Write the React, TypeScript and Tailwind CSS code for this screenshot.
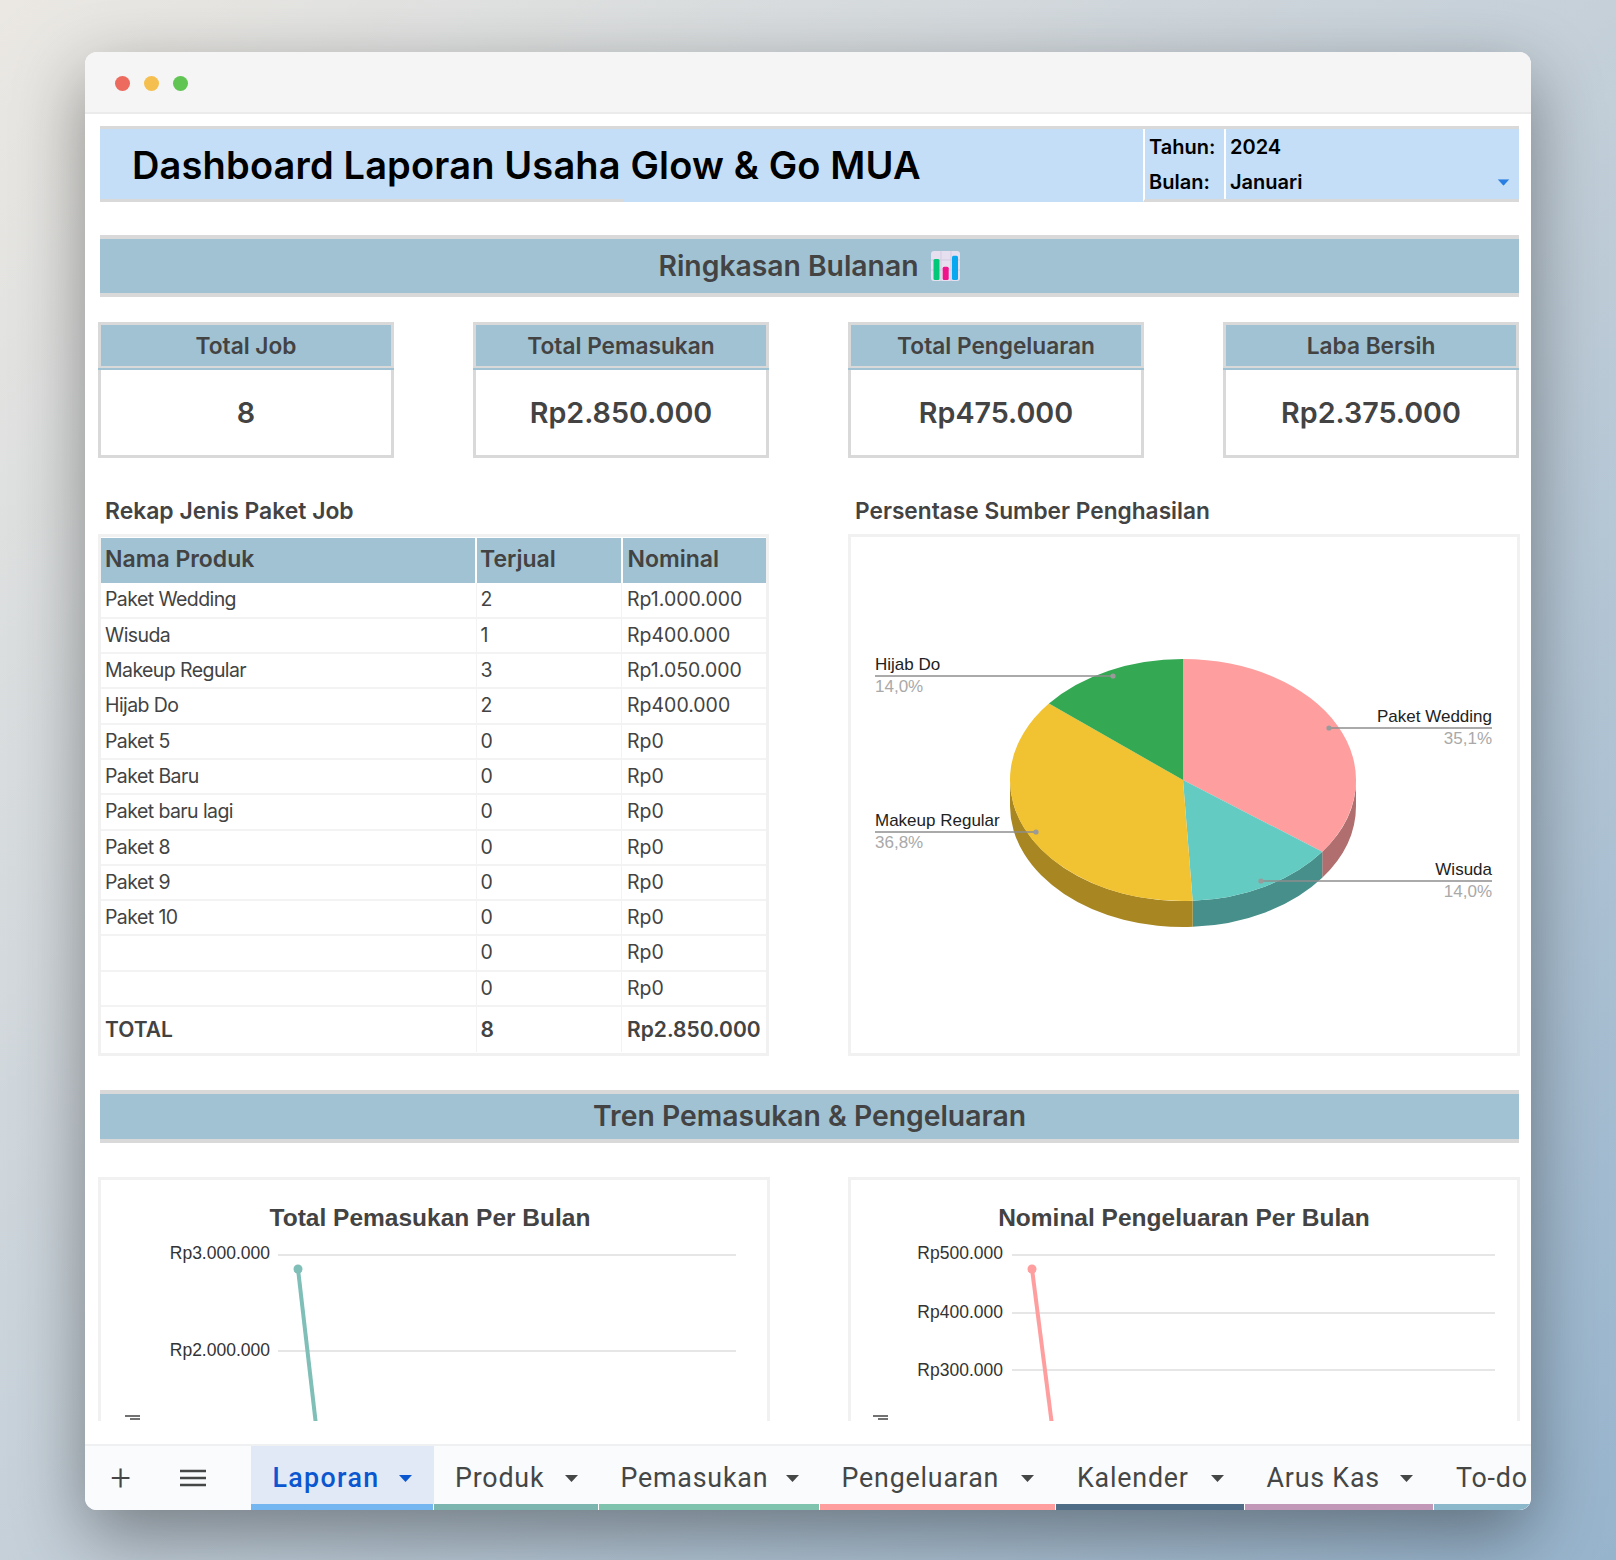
const rows = [
  ["Paket Wedding", "2", "Rp1.000.000"],
  ["Wisuda", "1", "Rp400.000"],
  ["Makeup Regular", "3", "Rp1.050.000"],
  ["Hijab Do", "2", "Rp400.000"],
  ["Paket 5", "0", "Rp0"],
  ["Paket Baru", "0", "Rp0"],
  ["Paket baru lagi", "0", "Rp0"],
  ["Paket 8", "0", "Rp0"],
  ["Paket 9", "0", "Rp0"],
  ["Paket 10", "0", "Rp0"],
  ["", "0", "Rp0"],
  ["", "0", "Rp0"],
];

const cards = [
  { title: "Total Job", value: "8" },
  { title: "Total Pemasukan", value: "Rp2.850.000" },
  { title: "Total Pengeluaran", value: "Rp475.000" },
  { title: "Laba Bersih", value: "Rp2.375.000" },
];

const tabs = [
  { name: "Laporan", width: "w-[182.5px]", bar: "bg-[#74b6f0]", active: true },
  { name: "Produk", width: "w-[165.5px]", bar: "bg-[#7cb5b0]" },
  { name: "Pemasukan", width: "w-[221px]", bar: "bg-[#7fc3ae]" },
  { name: "Pengeluaran", width: "w-[235.5px]", bar: "bg-[#ff9e9e]" },
  { name: "Kalender", width: "w-[189.5px]", bar: "bg-[#4f6d87]" },
  { name: "Arus Kas", width: "w-[189px]", bar: "bg-[#c198b8]" },
];

function Triangle({ className }: { className: string }) {
  return (
    <svg width="13" height="7" viewBox="0 0 13 7" className={className}>
      <polygon points="0,0 13,0 6.5,7" fill="currentColor" />
    </svg>
  );
}

function Band({ children, className }: { children: React.ReactNode; className: string }) {
  return (
    <div className={`mr-[1px] flex items-center justify-center bg-[#a0c2d2] border-y-[4px] border-[#d9d9d9] text-[#434343] text-[28.3px] font-semibold ${className}`}>
      {children}
    </div>
  );
}

function BarEmoji() {
  return (
    <svg width="29" height="30" viewBox="0 0 29 30" className="ml-[13px]">
      <rect x="0" y="0" width="29" height="30" rx="3" fill="#e6dff0" />
      <path d="M0 9h29M0 19h29M10 0v30M20 0v30" stroke="#d3cbe0" strokeWidth="1" />
      <rect x="2.5" y="8" width="6" height="21" rx="1.5" fill="#00c878" />
      <rect x="11.7" y="15.7" width="6" height="13.3" rx="1.5" fill="#f0148c" />
      <rect x="21" y="4.7" width="6" height="24.3" rx="1.5" fill="#08a8f0" />
    </svg>
  );
}

function StatCard({ title, value }: { title: string; value: string }) {
  return (
    <div className="w-[296px]">
      <div className="h-[46px] pt-[2px] flex items-center justify-center bg-[#a0c2d2] border-[3px] border-b-[2px] border-[#d9d9d9] text-[22.7px] font-semibold text-[#434343]">
        {title}
      </div>
      <div className="h-[2px] bg-[#a0c2d2]" />
      <div className="h-[88px] flex items-center justify-center border-[3px] border-t-0 border-[#d9d9d9] text-[28.7px] font-semibold text-[#434343]">
        {value}
      </div>
    </div>
  );
}

function ProductTable() {
  return (
    <div className="border-[3px] border-[#f1f1f1] h-[522px] w-[671px]">
      <table className="w-full table-fixed border-collapse text-[#434343]">
        <colgroup>
          <col className="w-[375px]" />
          <col className="w-[145.5px]" />
          <col />
        </colgroup>
        <thead>
          <tr className="h-[45px] bg-[#a0c2d2] text-[23px] border-t border-white">
            <th className="pl-[4px] pb-[2px] text-left font-semibold">Nama Produk</th>
            <th className="pl-[3px] pb-[2px] text-left font-semibold border-l-2 border-white">Terjual</th>
            <th className="pl-[5px] pb-[2px] text-left font-semibold border-l-2 border-white">Nominal</th>
          </tr>
        </thead>
        <tbody className="text-[19.5px]">
          {rows.map((r, i) => (
            <tr key={i} className="h-[35.3px] border-b-2 border-[#f3f3f3]">
              <td className="pl-[4px] tracking-[-0.03em]">{r[0]}</td>
              <td className="pl-[4px] border-l border-[#f3f3f3]">{r[1]}</td>
              <td className="pl-[5px] border-l border-[#f3f3f3]">{r[2]}</td>
            </tr>
          ))}
          <tr className="h-[46px] text-[21px] font-semibold">
            <td className="pl-[4px]">TOTAL</td>
            <td className="pl-[4px] border-l border-[#f3f3f3]">8</td>
            <td className="pl-[5px] border-l border-[#f3f3f3]">Rp2.850.000</td>
          </tr>
        </tbody>
      </table>
    </div>
  );
}

// titik di elips pie: x = cx + rx sin t, y = cy - ry cos t
const CX = 332;
const CY = 243;
const RX = 173;
const RY = 121;
const DEPTH = 26;

function pt(deg: number, dy = 0) {
  const t = (deg * Math.PI) / 180;
  return `${(CX + RX * Math.sin(t)).toFixed(2)} ${(CY - RY * Math.cos(t) + dy).toFixed(2)}`;
}

function slice(a: number, b: number) {
  const large = b - a > 180 ? 1 : 0;
  return `M${CX} ${CY}L${pt(a)}A${RX} ${RY} 0 ${large} 1 ${pt(b)}Z`;
}

function side(a: number, b: number) {
  return `M${pt(a)}A${RX} ${RY} 0 0 1 ${pt(b)}L${pt(b, DEPTH)}A${RX} ${RY} 0 0 0 ${pt(a, DEPTH)}Z`;
}

function PieLabel({ x, y, anchor, name, pct, x1, x2, dotX }: { x: number; y: number; anchor: "start" | "end"; name: string; pct: string; x1: number; x2: number; dotX: number }) {
  return (
    <g>
      <line x1={x1} x2={x2} y1={y} y2={y} stroke="#8e8e8e" strokeWidth="1.6" />
      <circle cx={dotX} cy={y} r="2.6" fill="#9a9a9a" />
      <text x={x} y={y - 6} textAnchor={anchor} fontSize="17" fill="#222222">{name}</text>
      <text x={x} y={y + 16} textAnchor={anchor} fontSize="17" fill="#a9a9a9">{pct}</text>
    </g>
  );
}

function PieChart() {
  return (
    <div className="border-[3px] border-[#f1f1f1] h-[522px] w-[672px]">
      <svg width="666" height="516" viewBox="0 0 666 516" className="font-['Liberation_Sans',sans-serif]">
        <path d={side(90, 126.4)} fill="#b06e6e" />
        <path d={side(126.4, 176.8)} fill="#468f8a" />
        <path d={side(176.8, 270)} fill="#a88722" />
        <path d={slice(0, 126.4)} fill="#ff9e9e" />
        <path d={slice(126.4, 176.8)} fill="#64cbc3" />
        <path d={slice(176.8, 309.2)} fill="#f1c232" />
        <path d={slice(309.2, 360)} fill="#34a853" />
        <PieLabel x={24} y={139} anchor="start" name="Hijab Do" pct="14,0%" x1={24} x2={262} dotX={262} />
        <PieLabel x={641} y={191} anchor="end" name="Paket Wedding" pct="35,1%" x1={478} x2={641} dotX={478} />
        <PieLabel x={24} y={295} anchor="start" name="Makeup Regular" pct="36,8%" x1={24} x2={185} dotX={185} />
        <PieLabel x={641} y={344} anchor="end" name="Wisuda" pct="14,0%" x1={410} x2={641} dotX={410} />
      </svg>
    </div>
  );
}

function LineChart({ title, titleX, labels, color, gridX1, gridX2, labelX, lineX1, lineX2, tickX }: { title: string; titleX: number; labels: { text: string; y: number; labelY: number }[]; color: string; gridX1: number; gridX2: number; labelX: number; lineX1: number; lineX2: number; tickX: number }) {
  return (
    <div className="h-[244px] w-[672px] border-x-[3px] border-t-[3px] border-[#f1f1f1] overflow-hidden">
      <svg width="666" height="241" viewBox="0 0 666 241" className="font-['Liberation_Sans',sans-serif]">
        <text x={titleX} y="46" textAnchor="middle" fontSize="24.5" fontWeight="700" fill="#434343">{title}</text>
        {labels.map((l) => (
          <g key={l.text}>
            <line x1={gridX1} x2={gridX2} y1={l.y} y2={l.y} stroke="#dedede" strokeWidth="1.5" />
            <text x={labelX} y={l.labelY} textAnchor="end" fontSize="17.5" fill="#333333">{l.text}</text>
          </g>
        ))}
        <line x1={lineX1} y1="89" x2={lineX2} y2="245" stroke={color} strokeWidth="4" />
        <circle cx={lineX1} cy="89" r="4.5" fill={color} />
        <path d={`M${tickX} 236h15M${tickX + 5} 239h10`} stroke="#444444" strokeWidth="1.5" />
      </svg>
    </div>
  );
}

export default function App() {
  return (
    <div className="w-[1616px] h-[1560px] overflow-hidden bg-linear-to-br from-[#ebe8e3] via-[#c5d0d9] to-[#97b4cd] pl-[85px] pt-[52px] font-['Inter',sans-serif]">
      <div className="w-[1446px] h-[1458px] flex flex-col bg-white rounded-xl overflow-hidden shadow-[0_24px_70px_rgba(0,0,0,0.4)]">
        <div className="h-[62px] shrink-0 flex items-center gap-[14px] pl-[30px] pt-[2px] bg-[#f5f5f5] border-b-2 border-[#ebebeb]">
          <span className="w-[15px] h-[15px] rounded-full bg-[#ec6a5e]" />
          <span className="w-[15px] h-[15px] rounded-full bg-[#f4bf4f]" />
          <span className="w-[15px] h-[15px] rounded-full bg-[#61c554]" />
        </div>

        <div className="h-[1307px] shrink-0 overflow-hidden pt-3 pl-[15px] pr-[11px]">
          <div className="h-[76px] mr-[1px] flex bg-[#c5def7] border-t-[3px] border-[#d9d9d9] text-black">
            <div className="w-[1043px] flex items-center pl-[32px] relative">
              <span className="text-[38px] font-semibold tracking-[0.004em] whitespace-nowrap">Dashboard Laporan Usaha Glow &amp; Go MUA</span>
              <div className="absolute left-0 bottom-0 w-[524px] h-[3px] bg-[#d9d9d9]" />
            </div>
            <div className="flex-1 flex flex-col border-l-2 border-b-[3px] border-l-white border-b-[#d9d9d9] text-[20px] font-semibold">
              <div className="h-[36px] flex items-center">
                <span className="w-[81px] pl-[4px] border-r-2 border-white h-full flex items-center">Tahun:</span>
                <span className="pl-[4px]">2024</span>
              </div>
              <div className="flex-1 flex items-center">
                <span className="w-[81px] pl-[4px] border-r-2 border-white h-full flex items-center">Bulan:</span>
                <span className="pl-[4px] flex-1">Januari</span>
                <Triangle className="text-[#2a7de1] mr-[9px] scale-90" />
              </div>
            </div>
          </div>

          <Band className="mt-[33px] h-[62px]">
            <span>Ringkasan Bulanan</span>
            <BarEmoji />
          </Band>

          <div className="mt-[25px] -ml-[2px] mr-[1px] flex justify-between">
            {cards.map((c) => (
              <StatCard key={c.title} title={c.title} value={c.value} />
            ))}
          </div>

          <div className="mt-[33px] -ml-[2px] flex justify-between">
            <div>
              <h2 className="h-[43px] pl-[7px] pt-[3px] text-[22.9px] font-semibold text-[#434343]">Rekap Jenis Paket Job</h2>
              <ProductTable />
            </div>
            <div>
              <h2 className="h-[43px] pl-[7px] pt-[3px] text-[22.7px] font-semibold text-[#434343]">Persentase Sumber Penghasilan</h2>
              <PieChart />
            </div>
          </div>

          <Band className="mt-[34px] h-[53px]">Tren Pemasukan &amp; Pengeluaran</Band>

          <div className="mt-[34px] -ml-[2px] flex justify-between">
            <LineChart
              title="Total Pemasukan Per Bulan"
              titleX={329}
              labels={[{ text: "Rp3.000.000", y: 75, labelY: 79 }, { text: "Rp2.000.000", y: 171, labelY: 176 }]}
              color="#7fbfb8"
              gridX1={177}
              gridX2={635}
              labelX={169}
              lineX1={197}
              lineX2={215}
              tickX={24}
            />
            <LineChart
              title="Nominal Pengeluaran Per Bulan"
              titleX={333}
              labels={[{ text: "Rp500.000", y: 75, labelY: 79 }, { text: "Rp400.000", y: 133, labelY: 138 }, { text: "Rp300.000", y: 190, labelY: 196 }]}
              color="#ff9e9e"
              gridX1={161}
              gridX2={644}
              labelX={152}
              lineX1={181}
              lineX2={201}
              tickX={22}
            />
          </div>
        </div>

        <div className="h-[23px] shrink-0 bg-white" />

        <div className="flex-1 flex bg-[#f9fbfd] border-t-2 border-[#eef0f2] text-[#444746] font-['Roboto',sans-serif] text-[26.8px] tracking-[0.03em]">
          <div className="w-[166px] shrink-0 flex items-center">
            <span className="w-[72px] text-center text-[36px] font-light leading-none">+</span>
            <svg width="26" height="18" viewBox="0 0 26 18" className="ml-[23px]">
              <path d="M0 2h26M0 9h26M0 16h26" stroke="#444746" strokeWidth="2.4" />
            </svg>
          </div>
          {tabs.map((t) => (
            <div key={t.name} className={`${t.width} shrink-0 flex flex-col ${t.active ? "bg-[#e1e9f7] text-[#0b57d0] font-medium tracking-[0.05em]" : ""}`}>
              <div className="flex-1 flex items-center justify-between pl-[21.5px] pr-[21.5px] pt-[7px]">
                <span>{t.name}</span>
                <Triangle className={t.active ? "text-[#0b57d0]" : "text-[#444746]"} />
              </div>
              <div className={`h-[6px] border-r border-white ${t.bar}`} />
            </div>
          ))}
          <div className="w-[97px] shrink-0 flex flex-col overflow-hidden">
            <div className="flex-1 flex items-center pl-[22px] pt-[7px]">
              <span>To-do</span>
            </div>
            <div className="h-[6px] bg-[#8cb8cc]" />
          </div>
        </div>
      </div>
    </div>
  );
}
